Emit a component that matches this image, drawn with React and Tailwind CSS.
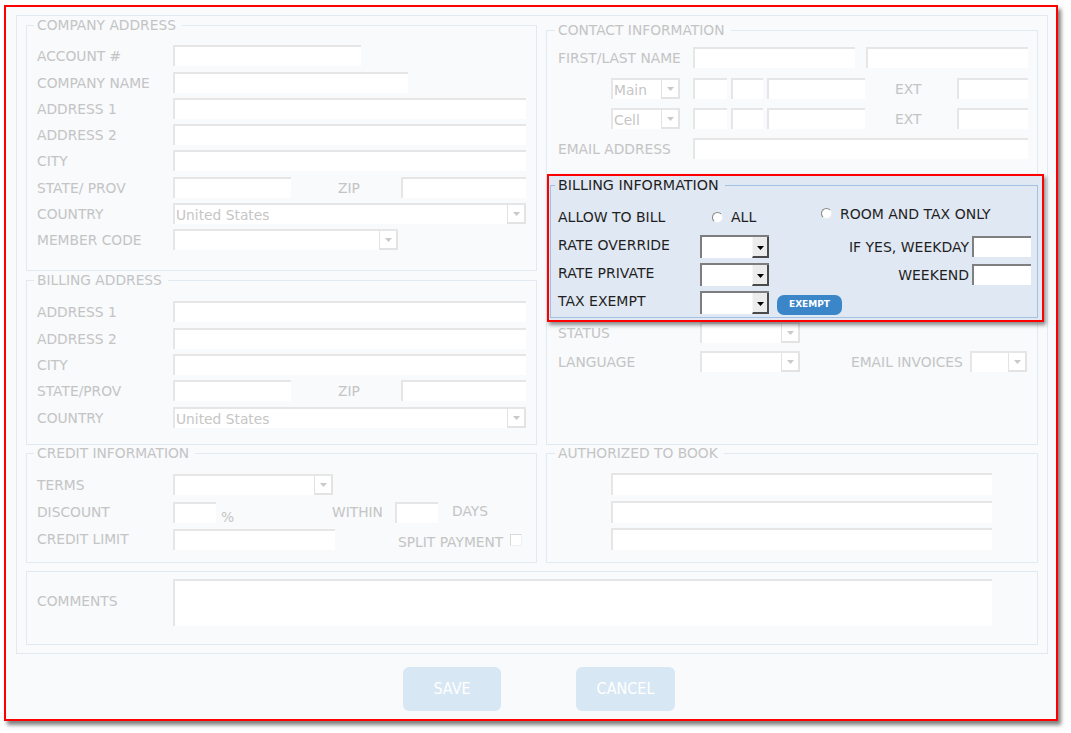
import React from "react";

const LBL = "text-[13.8px] leading-[16px] text-[#c4c4c4] whitespace-nowrap";
const BL = "text-[14px] leading-[16px] text-[#1f1f1f] whitespace-nowrap";

function Lb({ children, cls = "w-[136px]" }) {
  return <div className={`shrink-0 ${LBL} ${cls}`}>{children}</div>;
}

function BLb({ children, cls = "w-[142px]" }) {
  return <div className={`shrink-0 ${BL} ${cls}`}>{children}</div>;
}

function GInput({ cls = "", h = "h-[21px]" }) {
  return <div className={`shrink-0 bg-white border-t-2 border-l-2 border-[#e6e6e6] ${h} ${cls}`} />;
}

function GArrow() {
  return (
    <svg width="7" height="4" viewBox="0 0 7 4">
      <path d="M0 0h7L3.5 4z" fill="#c9c9c9" />
    </svg>
  );
}

function GSelect({ cls = "", text = "" }) {
  return (
    <div className={`shrink-0 flex h-[21px] bg-white border-t-2 border-l-2 border-[#e6e6e6] ${cls}`}>
      <span className="self-center pl-[1px] text-[13.8px] leading-[16px] text-[#c6c6c6] whitespace-nowrap overflow-hidden">
        {text}
      </span>
      <div className="ml-auto w-[19px] shrink-0 h-full border-l border-r-2 border-b-2 border-[#e3e3e3] flex items-center justify-center">
        <GArrow />
      </div>
    </div>
  );
}

function BSelect() {
  return (
    <div className="shrink-0 flex w-[69px] h-[23px] bg-white border-t-2 border-l-2 border-[#7d7d7d]">
      <div className="ml-auto w-[17px] h-full bg-[#ececec] border-l border-l-[#f7f7f7] border-r-2 border-b-2 border-r-[#4a4a4a] border-b-[#4a4a4a] flex items-center justify-center pt-[2px]">
        <svg width="7" height="4" viewBox="0 0 7 4">
          <path d="M0 0h7L3.5 4z" fill="#000" />
        </svg>
      </div>
    </div>
  );
}

function BInput() {
  return <div className="shrink-0 w-[59px] h-[21px] bg-white border-t-2 border-l-2 border-[#7f7f7f]" />;
}

function Radio() {
  return (
    <div className="shrink-0 w-[11px] h-[11px] rounded-full bg-white border border-t-[#858585] border-l-[#858585] border-r-[#ededed] border-b-[#ededed]" />
  );
}

function Fs({ legend, cls = "", legendCls = "ml-[7px]", children }) {
  return (
    <fieldset className={`border border-[#e1eaf3] min-w-0 ${cls}`}>
      {legend && (
        <legend className={`pl-[3px] pr-[6px] ${LBL} ${legendCls}`}>{legend}</legend>
      )}
      {children}
    </fieldset>
  );
}

function Row({ cls = "", children }) {
  return <div className={`flex items-center h-[21px] ${cls}`}>{children}</div>;
}

export default function App() {
  return (
    <div className="w-[1071px] h-[733px] bg-white font-['DejaVu_Sans',sans-serif] pt-[5px] pl-[4px]">
      <div className="w-[1054px] h-[716px] border-2 border-[#ff0000] bg-[#f8fafc] shadow-[3px_4px_4px_rgba(0,0,0,0.5)] pt-[8px] pl-[10px]">
        <div className="w-[1032px] h-[639px] border border-[#e1eaf3] px-[9px] flex flex-col">
          {/* Row 1 */}
          <div className="flex gap-[9px] h-[429px] shrink-0">
            <div className="w-[511px] flex flex-col gap-[1px] pt-[1px]">
              <Fs legend="COMPANY ADDRESS" cls="h-[254px]">
                <div className="px-[10px] pt-[12px]">
                  <Row>
                    <Lb>ACCOUNT #</Lb>
                    <GInput cls="w-[188px]" />
                  </Row>
                  <Row cls="mt-[6px]">
                    <Lb>COMPANY NAME</Lb>
                    <GInput cls="w-[235px]" />
                  </Row>
                  <Row cls="mt-[5px]">
                    <Lb>ADDRESS 1</Lb>
                    <GInput cls="w-[353px]" />
                  </Row>
                  <Row cls="mt-[5px]">
                    <Lb>ADDRESS 2</Lb>
                    <GInput cls="w-[353px]" />
                  </Row>
                  <Row cls="mt-[5px]">
                    <Lb>CITY</Lb>
                    <GInput cls="w-[353px]" />
                  </Row>
                  <Row cls="mt-[6px]">
                    <Lb>STATE/ PROV</Lb>
                    <GInput cls="w-[118px]" />
                    <Lb cls="w-[110px] pl-[47px]">ZIP</Lb>
                    <GInput cls="w-[125px]" />
                  </Row>
                  <Row cls="mt-[5px]">
                    <Lb>COUNTRY</Lb>
                    <GSelect cls="w-[353px]" text="United States" />
                  </Row>
                  <Row cls="mt-[5px]">
                    <Lb>MEMBER CODE</Lb>
                    <GSelect cls="w-[225px]" />
                  </Row>
                </div>
              </Fs>
              <Fs legend="BILLING ADDRESS" cls="h-[173px]">
                <div className="px-[10px] pt-[13px]">
                  <Row>
                    <Lb>ADDRESS 1</Lb>
                    <GInput cls="w-[353px]" />
                  </Row>
                  <Row cls="mt-[6px]">
                    <Lb>ADDRESS 2</Lb>
                    <GInput cls="w-[353px]" />
                  </Row>
                  <Row cls="mt-[5px]">
                    <Lb>CITY</Lb>
                    <GInput cls="w-[353px]" />
                  </Row>
                  <Row cls="mt-[5px]">
                    <Lb>STATE/PROV</Lb>
                    <GInput cls="w-[118px]" />
                    <Lb cls="w-[110px] pl-[47px]">ZIP</Lb>
                    <GInput cls="w-[125px]" />
                  </Row>
                  <Row cls="mt-[6px]">
                    <Lb>COUNTRY</Lb>
                    <GSelect cls="w-[353px]" text="United States" />
                  </Row>
                </div>
              </Fs>
            </div>

            <div className="w-[492px] pt-[6px]">
              <Fs legend="CONTACT INFORMATION" cls="h-[423px]" legendCls="ml-[8px]">
                <div className="pl-[11px] pt-[9px]">
                  <Row>
                    <Lb cls="w-[135px]">FIRST/LAST NAME</Lb>
                    <GInput cls="w-[162px]" />
                    <GInput cls="w-[162px] ml-[11px]" />
                  </Row>
                  <Row cls="mt-[10px]">
                    <div className="w-[53px] shrink-0" />
                    <GSelect cls="w-[69px]" text="Main" />
                    <GInput cls="w-[34px] ml-[13px]" />
                    <GInput cls="w-[32px] ml-[4px]" />
                    <GInput cls="w-[98px] ml-[4px]" />
                    <Lb cls="w-[62px] ml-[30px]">EXT</Lb>
                    <GInput cls="w-[71px]" />
                  </Row>
                  <Row cls="mt-[9px]">
                    <div className="w-[53px] shrink-0" />
                    <GSelect cls="w-[69px]" text="Cell" />
                    <GInput cls="w-[34px] ml-[13px]" />
                    <GInput cls="w-[32px] ml-[4px]" />
                    <GInput cls="w-[98px] ml-[4px]" />
                    <Lb cls="w-[62px] ml-[30px]">EXT</Lb>
                    <GInput cls="w-[71px]" />
                  </Row>
                  <Row cls="mt-[9px]">
                    <Lb cls="w-[135px]">EMAIL ADDRESS</Lb>
                    <GInput cls="w-[335px]" />
                  </Row>

                  {/* Highlighted billing information */}
                  <div className="mt-[15px] -ml-[11px] w-[497px] h-[148px] border-2 border-[#ff0000] bg-[#dfe8f3] shadow-[2px_3px_4px_rgba(0,0,0,0.45)] relative">
                    <fieldset className="ml-[1px] mt-[1px] w-[488px] h-[141px] border border-[#a3c1e2] min-w-0">
                      <legend className="ml-[4px] pl-[3px] pr-[6px] text-[14.3px] leading-[16px] text-[#1f1f1f] whitespace-nowrap">
                        BILLING INFORMATION
                      </legend>
                      <div className="pl-[7px] pr-[6px] pt-[14px]">
                        <div className="flex items-center h-[20px]">
                          <BLb>ALLOW TO BILL</BLb>
                          <div className="w-[121px] shrink-0 flex items-center pl-[12px]">
                            <Radio />
                            <span className={`ml-[8px] ${BL}`}>ALL</span>
                          </div>
                          <div className="flex items-center mb-[7px]">
                            <Radio />
                            <span className={`ml-[8px] ${BL}`}>ROOM AND TAX ONLY</span>
                          </div>
                        </div>
                        <div className="flex items-center h-[23px] mt-[8px]">
                          <BLb cls="w-[142px] mb-[3px]">RATE OVERRIDE</BLb>
                          <BSelect />
                          <div className="flex-1" />
                          <span className={BL}>IF YES, WEEKDAY</span>
                          <div className="ml-[3px]">
                            <BInput />
                          </div>
                        </div>
                        <div className="flex items-center h-[23px] mt-[5px]">
                          <BLb cls="w-[142px] mb-[3px]">RATE PRIVATE</BLb>
                          <BSelect />
                          <div className="flex-1" />
                          <span className={BL}>WEEKEND</span>
                          <div className="ml-[3px]">
                            <BInput />
                          </div>
                        </div>
                        <div className="flex items-center h-[23px] mt-[5px]">
                          <BLb cls="w-[142px] mb-[3px]">TAX EXEMPT</BLb>
                          <BSelect />
                          <div className="ml-[8px] mt-[5px] w-[65px] h-[20px] rounded-[7px] bg-[#3a86c8] text-white text-[9px] font-bold flex items-center justify-center">
                            EXEMPT
                          </div>
                        </div>
                      </div>
                    </fieldset>
                  </div>

                  <Row>
                    <Lb cls="w-[142px]">STATUS</Lb>
                    <GSelect cls="w-[100px]" />
                  </Row>
                  <Row cls="mt-[8px]">
                    <Lb cls="w-[142px]">LANGUAGE</Lb>
                    <GSelect cls="w-[100px]" />
                    <Lb cls="w-[119px] ml-[51px]">EMAIL INVOICES</Lb>
                    <GSelect cls="w-[57px]" />
                  </Row>
                </div>
              </Fs>
            </div>
          </div>

          {/* Row 2 */}
          <div className="flex gap-[9px] h-[118px] shrink-0">
            <Fs legend="CREDIT INFORMATION" cls="w-[511px] h-[118px]">
              <div className="px-[10px] pt-[13px]">
                <Row>
                  <Lb>TERMS</Lb>
                  <GSelect cls="w-[160px]" />
                </Row>
                <Row cls="mt-[7px]">
                  <Lb cls="w-[136px] mb-[2px]">DISCOUNT</Lb>
                  <GInput cls="w-[43px]" />
                  <div className={`w-[116px] shrink-0 pl-[5px] pt-[8px] ${LBL}`}>%</div>
                  <Lb cls="w-[63px] mb-[2px]">WITHIN</Lb>
                  <GInput cls="w-[43px]" />
                  <div className={`pl-[14px] pb-[4px] ${LBL}`}>DAYS</div>
                </Row>
                <Row cls="mt-[6px]">
                  <Lb cls="w-[136px] mb-[2px]">CREDIT LIMIT</Lb>
                  <GInput cls="w-[162px]" />
                  <div className="w-[63px] shrink-0" />
                  <div className={`pt-[5px] ${LBL}`}>SPLIT PAYMENT</div>
                  <div className="ml-[7px] w-[12px] h-[12px] bg-white border border-t-[#d9d9d9] border-l-[#d9d9d9] border-r-[#f0f0f0] border-b-[#f0f0f0]" />
                </Row>
              </div>
            </Fs>
            <Fs legend="AUTHORIZED TO BOOK" cls="w-[492px] h-[118px]" legendCls="ml-[8px]">
              <div className="pl-[64px] pt-[12px]">
                <GInput cls="w-[381px]" h="h-[22px]" />
                <div className="mt-[6px]">
                  <GInput cls="w-[381px]" h="h-[22px]" />
                </div>
                <div className="mt-[5px]">
                  <GInput cls="w-[381px]" h="h-[22px]" />
                </div>
              </div>
            </Fs>
          </div>

          {/* Comments */}
          <div className="mt-[8px] h-[74px] shrink-0 border border-[#e1eaf3] px-[10px] pt-[7px]">
            <div className="flex items-center h-[47px]">
              <Lb cls="w-[136px] mb-[4px]">COMMENTS</Lb>
              <GInput cls="w-[819px]" h="h-[47px]" />
            </div>
          </div>
        </div>

        {/* Buttons */}
        <div className="flex mt-[13px] ml-[387px] gap-[75px]">
          <div className="w-[98px] h-[44px] rounded-[6px] bg-[#d8e7f4] text-white text-[16px] font-['DejaVu_Sans_Condensed','DejaVu_Sans',sans-serif] font-stretch-condensed flex items-center justify-center">
            SAVE
          </div>
          <div className="w-[99px] h-[44px] rounded-[6px] bg-[#d8e7f4] text-white text-[16px] font-['DejaVu_Sans_Condensed','DejaVu_Sans',sans-serif] font-stretch-condensed flex items-center justify-center">
            CANCEL
          </div>
        </div>
      </div>
    </div>
  );
}
